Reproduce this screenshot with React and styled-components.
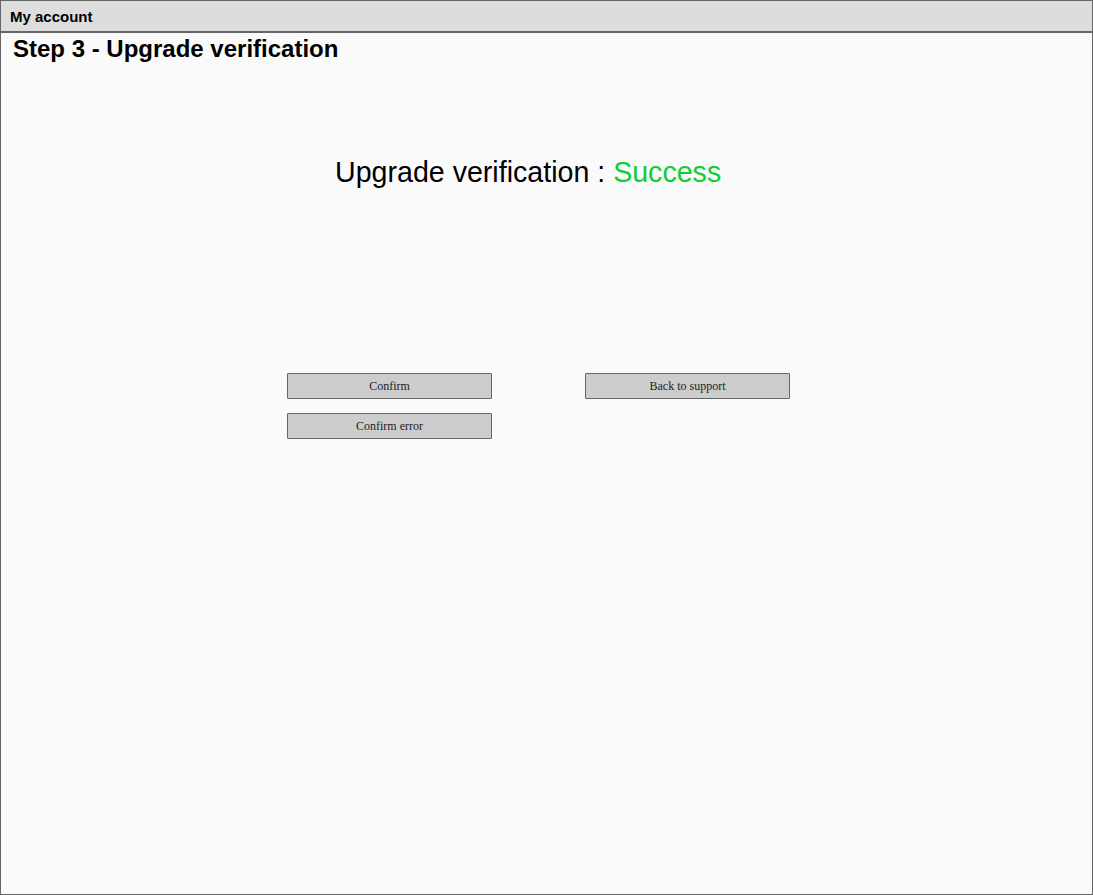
import React from "react";
import styled, { createGlobalStyle } from "styled-components";

const GlobalStyle = createGlobalStyle`
  html, body {
    margin: 0;
    padding: 0;
    background: #ffffff;
  }
  * {
    box-sizing: border-box;
  }
`;

const actions = [
  { label: "Confirm", col: 1, row: 1 },
  { label: "Back to support", col: 2, row: 1 },
  { label: "Confirm error", col: 1, row: 2 },
];

const App = () => {
  return (
    <>
      <GlobalStyle />
      <Frame>
        <TopBar>My account</TopBar>
        <StepTitle>Step 3 - Upgrade verification</StepTitle>
        <Status>
          Upgrade verification : <StatusValue>Success</StatusValue>
        </Status>
        <ButtonGrid>
          {actions.map(a => (
            <ActionButton key={a.label} col={a.col} row={a.row}>
              {a.label}
            </ActionButton>
          ))}
        </ButtonGrid>
      </Frame>
    </>
  );
};

// FRAME

const Frame = styled.div`
  width: 1093px;
  height: 895px;
  border: 1px solid #666666;
  background-color: #fafafa;
  display: flex;
  flex-direction: column;
  font-family: "Liberation Sans", Arial, sans-serif;
  color: #000000;
`;

const TopBar = styled.div`
  height: 32px;
  padding: 1px 0 0 9px;
  background-color: #dddddd;
  border-bottom: 2px solid #666666;
  font-size: 15px;
  font-weight: bold;
  line-height: 29px;
`;

const StepTitle = styled.h1`
  margin: 2px 0 0 12px;
  font-size: 24px;
  font-weight: bold;
  line-height: 27.6px;
`;

// STATUS

const Status = styled.div`
  margin-top: 93px;
  padding-left: 334px;
  font-size: 28.6px;
  line-height: 33px;
`;

const StatusValue = styled.span`
  color: #11cc33;
`;

// BUTTONS

const ButtonGrid = styled.div`
  margin-top: 184px;
  padding-left: 286px;
  display: grid;
  grid-template-columns: 205px 205px;
  grid-auto-rows: 26px;
  column-gap: 93px;
  row-gap: 14px;
`;

const ActionButton = styled.div`
  grid-column: ${props => props.col};
  grid-row: ${props => props.row};
  display: flex;
  align-items: center;
  justify-content: center;
  padding-top: 1px;
  background-color: #cccccc;
  border: 1px solid #666666;
  border-radius: 1px;
  font-family: "Liberation Serif", "Times New Roman", serif;
  font-size: 12px;
  color: #222222;
`;

export default App;
